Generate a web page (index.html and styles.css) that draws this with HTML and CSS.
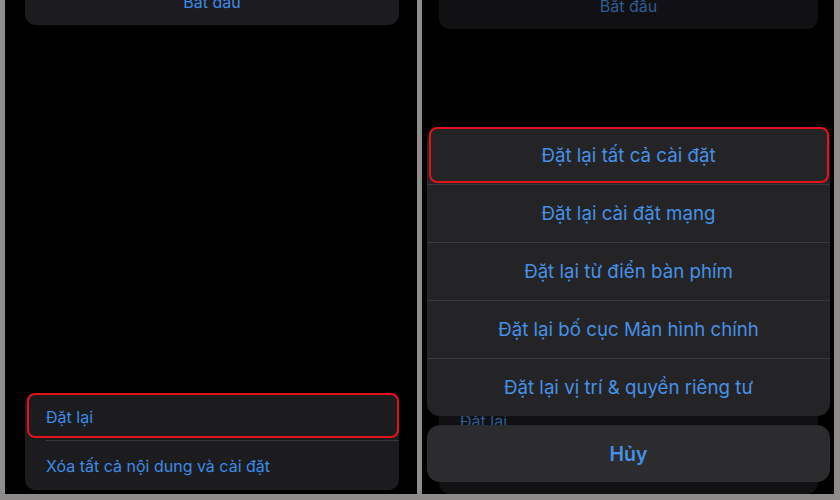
FILE: index.html
```html
<!DOCTYPE html>
<html lang="vi">
<head>
    <meta charset="UTF-8">
    <meta name="viewport" content="width=device-width, initial-scale=1.0">
    <title>Đặt lại</title>
    <link rel="stylesheet" href="styles.css">
</head>
<body>
    <div class="screens">
        <!-- Left screen: Reset list -->
        <div class="phone">
            <div class="card top-card">
                <div class="row center">Bắt đầu</div>
            </div>
            <div class="card bottom-card">
                <div class="row marked">Đặt lại</div>
                <div class="row">Xóa tất cả nội dung và cài đặt</div>
            </div>
        </div>

        <!-- Right screen: action sheet -->
        <div class="phone dimmed">
            <div class="card top-card">
                <div class="row center">Bắt đầu</div>
            </div>
            <div class="card bottom-card">
                <div class="row">Đặt lại</div>
                <div class="row">Xóa tất cả nội dung và cài đặt</div>
            </div>

            <div class="sheet-wrap">
                <div class="sheet">
                    <div class="sheet-item marked">Đặt lại tất cả cài đặt</div>
                    <div class="sheet-item">Đặt lại cài đặt mạng</div>
                    <div class="sheet-item">Đặt lại từ điển bàn phím</div>
                    <div class="sheet-item">Đặt lại bố cục Màn hình chính</div>
                    <div class="sheet-item">Đặt lại vị trí &amp; quyền riêng tư</div>
                </div>
                <div class="cancel">Hủy</div>
            </div>
        </div>
    </div>
</body>
</html>
```

FILE: styles.css
```css
/* Page */
body {
    margin: 0;
    background: #8d8c8a;
    font-family: Inter, "Noto Sans", sans-serif;
    overflow: hidden;
}

.screens {
    display: flex;
    gap: 5px;
    padding: 0 6px 0 5px;
    height: 494px;
}

/* Phone screen */
.phone {
    position: relative;
    flex: 1;
    background: #000;
    display: flex;
    flex-direction: column;
    justify-content: space-between;
    overflow: hidden;
}

.card {
    background: #1c1c1e;
    border-radius: 11px;
    margin: 0 18px 0 20px;
}

.top-card {
    margin-top: -22px;
}

.top-card .row {
    height: 47px;
}

.bottom-card {
    margin-bottom: 4px;
}

.row {
    position: relative;
    height: 48px;
    display: flex;
    align-items: center;
    padding-left: 21px;
    color: #3d8ae8;
    font-size: 16px;
}

.row + .row {
    height: 49px;
}

.row + .row::before {
    content: "";
    position: absolute;
    top: -1px;
    left: 21px;
    right: 0;
    border-top: 1px solid #38383a;
}

.row.center {
    justify-content: center;
    padding-left: 0;
}

/* Red highlight frame */
.marked::after {
    content: "";
    position: absolute;
    inset: 0 0 3px 2px;
    border: 2px solid #e3121c;
    border-radius: 8px;
}

/* Dimmed background on the right */
.dimmed .card {
    background: #111113;
    margin: 0 16px 0 17px;
}

.dimmed .top-card {
    margin-top: -18px;
}

.dimmed .bottom-card {
    margin-bottom: 0;
}

.dimmed .row {
    color: #2e5c93;
}

.dimmed .row + .row::before {
    border-color: #1e1e20;
}

/* Action sheet */
.sheet-wrap {
    position: absolute;
    left: 5px;
    right: 4px;
    bottom: 12px;
    display: flex;
    flex-direction: column;
    gap: 9px;
}

.sheet {
    background: #242426;
    border-radius: 13px;
}

.sheet-item {
    position: relative;
    height: 57px;
    display: flex;
    align-items: center;
    justify-content: center;
    color: #4690e6;
    font-size: 18.7px;
}

.sheet-item + .sheet-item {
    border-top: 1px solid #3b3b3d;
}

.sheet-item.marked::after {
    inset: 0 1px 1px 2px;
}

.cancel {
    height: 57px;
    background: #2c2c2e;
    border-radius: 13px;
    display: flex;
    align-items: center;
    justify-content: center;
    color: #4690e6;
    font-size: 19.5px;
    font-weight: 600;
}
```
